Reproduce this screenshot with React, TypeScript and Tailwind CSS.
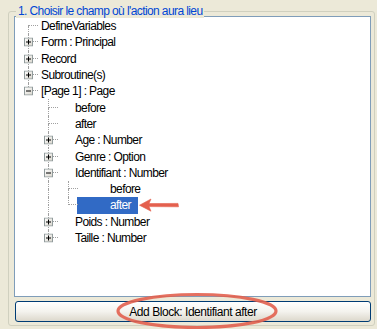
import React from 'react'

type Guide = 'none' | 'pipe' | 'tee' | 'elbow' | 'start'

interface Row {
  label: string
  guides: Guide[]
  exp?: '+' | '-'
  selected?: boolean
}

const rows: Row[] = [
  { label: 'DefineVariables', guides: ['start'] },
  { label: 'Form : Principal', guides: ['tee'], exp: '+' },
  { label: 'Record', guides: ['tee'], exp: '+' },
  { label: 'Subroutine(s)', guides: ['tee'], exp: '+' },
  { label: '[Page 1] : Page', guides: ['elbow'], exp: '-' },
  { label: 'before', guides: ['none', 'tee'] },
  { label: 'after', guides: ['none', 'tee'] },
  { label: 'Age : Number', guides: ['none', 'tee'], exp: '+' },
  { label: 'Genre : Option', guides: ['none', 'tee'], exp: '+' },
  { label: 'Identifiant : Number', guides: ['none', 'tee'], exp: '-' },
  { label: 'before', guides: ['none', 'pipe', 'tee'] },
  { label: 'after', guides: ['none', 'pipe', 'elbow'], selected: true },
  { label: 'Poids : Number', guides: ['none', 'tee'], exp: '+' },
  { label: 'Taille : Number', guides: ['none', 'elbow'], exp: '+' },
]

const dot = 'border-dotted border-[#A0A0A0]'

// Expander box, drawn like the XP tree "+" / "-" glyph
const Expander = ({ kind }: { kind: '+' | '-' }) => (
  <svg
    width="9"
    height="9"
    viewBox="0 0 9 9"
    className="absolute left-[6px] top-1/2 -translate-y-1/2"
  >
    <defs>
      <linearGradient id="xpbox" x1="0" y1="0" x2="1" y2="1">
        <stop offset="0" stopColor="#FFFFFF" />
        <stop offset="1" stopColor="#D8D5CC" />
      </linearGradient>
    </defs>
    <rect x="0.5" y="0.5" width="8" height="8" fill="url(#xpbox)" stroke="#919B9C" />
    <line x1="2" y1="4.5" x2="7" y2="4.5" stroke="#000" />
    {kind === '+' && <line x1="4.5" y1="2" x2="4.5" y2="7" stroke="#000" />}
  </svg>
)

const GuideCell = ({ type, exp }: { type: Guide; exp?: '+' | '-' }) => {
  const up = type === 'pipe' || type === 'tee' || type === 'elbow'
  const down = type === 'pipe' || type === 'tee' || type === 'start'
  const across = type === 'tee' || type === 'elbow' || type === 'start'
  return (
    <div className="relative grid h-full w-[20px] shrink-0 grid-cols-[10px_10px] grid-rows-2">
      <div />
      <div className={`${up ? `border-l ${dot}` : ''} ${across ? `border-b ${dot}` : ''}`} />
      <div />
      <div className={down ? `border-l ${dot}` : ''} />
      {exp && <Expander kind={exp} />}
    </div>
  )
}

const Arrow = () => (
  <svg width="40" height="14" viewBox="0 0 40 14" className="ml-[1px] shrink-0">
    <path
      d="M0.5 7.2 L12 1 L10 5.6 L39 5.4 L39.5 8.8 L10 8.6 L12 13.2 Z"
      fill="#E4604E"
      stroke="#E4604E"
      strokeWidth="0.6"
      strokeLinejoin="round"
    />
  </svg>
)

const TreeRow = ({ row }: { row: Row }) => {
  const level = row.guides.length
  const last = row.guides.length - 1
  return (
    <div className="flex h-[16.3px] items-stretch">
      {row.guides.map((g, i) => (
        <GuideCell key={i} type={g} exp={i === last ? row.exp : undefined} />
      ))}
      {row.selected ? (
        <>
          <span className="ml-[-1px] flex items-center bg-[#316AC5] pl-[33px] pr-[7px] text-white">
            {row.label}
          </span>
          <div className="flex items-center">
            <Arrow />
          </div>
        </>
      ) : (
        <span
          className={`flex items-center whitespace-nowrap ${
            level === 1 ? 'pl-[3px]' : level === 2 ? 'pl-[17px]' : 'pl-[32px]'
          }`}
        >
          {row.label}
        </span>
      )}
    </div>
  )
}

export default function App() {
  return (
    <div className="h-[329px] w-[377px] overflow-hidden bg-[#ECE9D8] pl-[8px] pt-[11px] font-['Liberation_Sans',Arial,sans-serif] text-[12px] leading-[16px] tracking-[-0.6px] text-black">
      <div className="relative flex h-[315px] w-[367px] flex-col rounded-[3px] border border-[#D0D0BF] pl-[5px] pr-[3px] pt-[4px]">
        <span className="absolute left-[7px] top-[-8px] bg-[#ECE9D8] px-[2px] leading-[14px] text-[#0046D5]">
          1. Choisir le champ où l'action aura lieu
        </span>

        <div className="h-[281px] w-[357px] overflow-hidden border border-[#7F9DB9] bg-white pl-[3px] pt-[1px]">
          {rows.map((r, i) => (
            <TreeRow key={i} row={r} />
          ))}
        </div>

        <button className="relative ml-[1px] mt-[4px] flex h-[21px] w-[356px] items-center justify-center rounded-[3px] border border-[#003C74] bg-linear-to-b from-[#FFFFFF] via-[#F4F3EE] to-[#DCD8CC] tracking-[-0.45px] text-black">
          Add Block: Identifiant after
          <svg
            width="166"
            height="38"
            viewBox="0 0 166 38"
            className="pointer-events-none absolute left-[100px] top-[-10px] overflow-visible"
          >
            <ellipse cx="81" cy="19" rx="79" ry="16.5" fill="none" stroke="#E2604F" strokeWidth="3.2" strokeOpacity="0.9" />
          </svg>
        </button>
      </div>
    </div>
  )
}
